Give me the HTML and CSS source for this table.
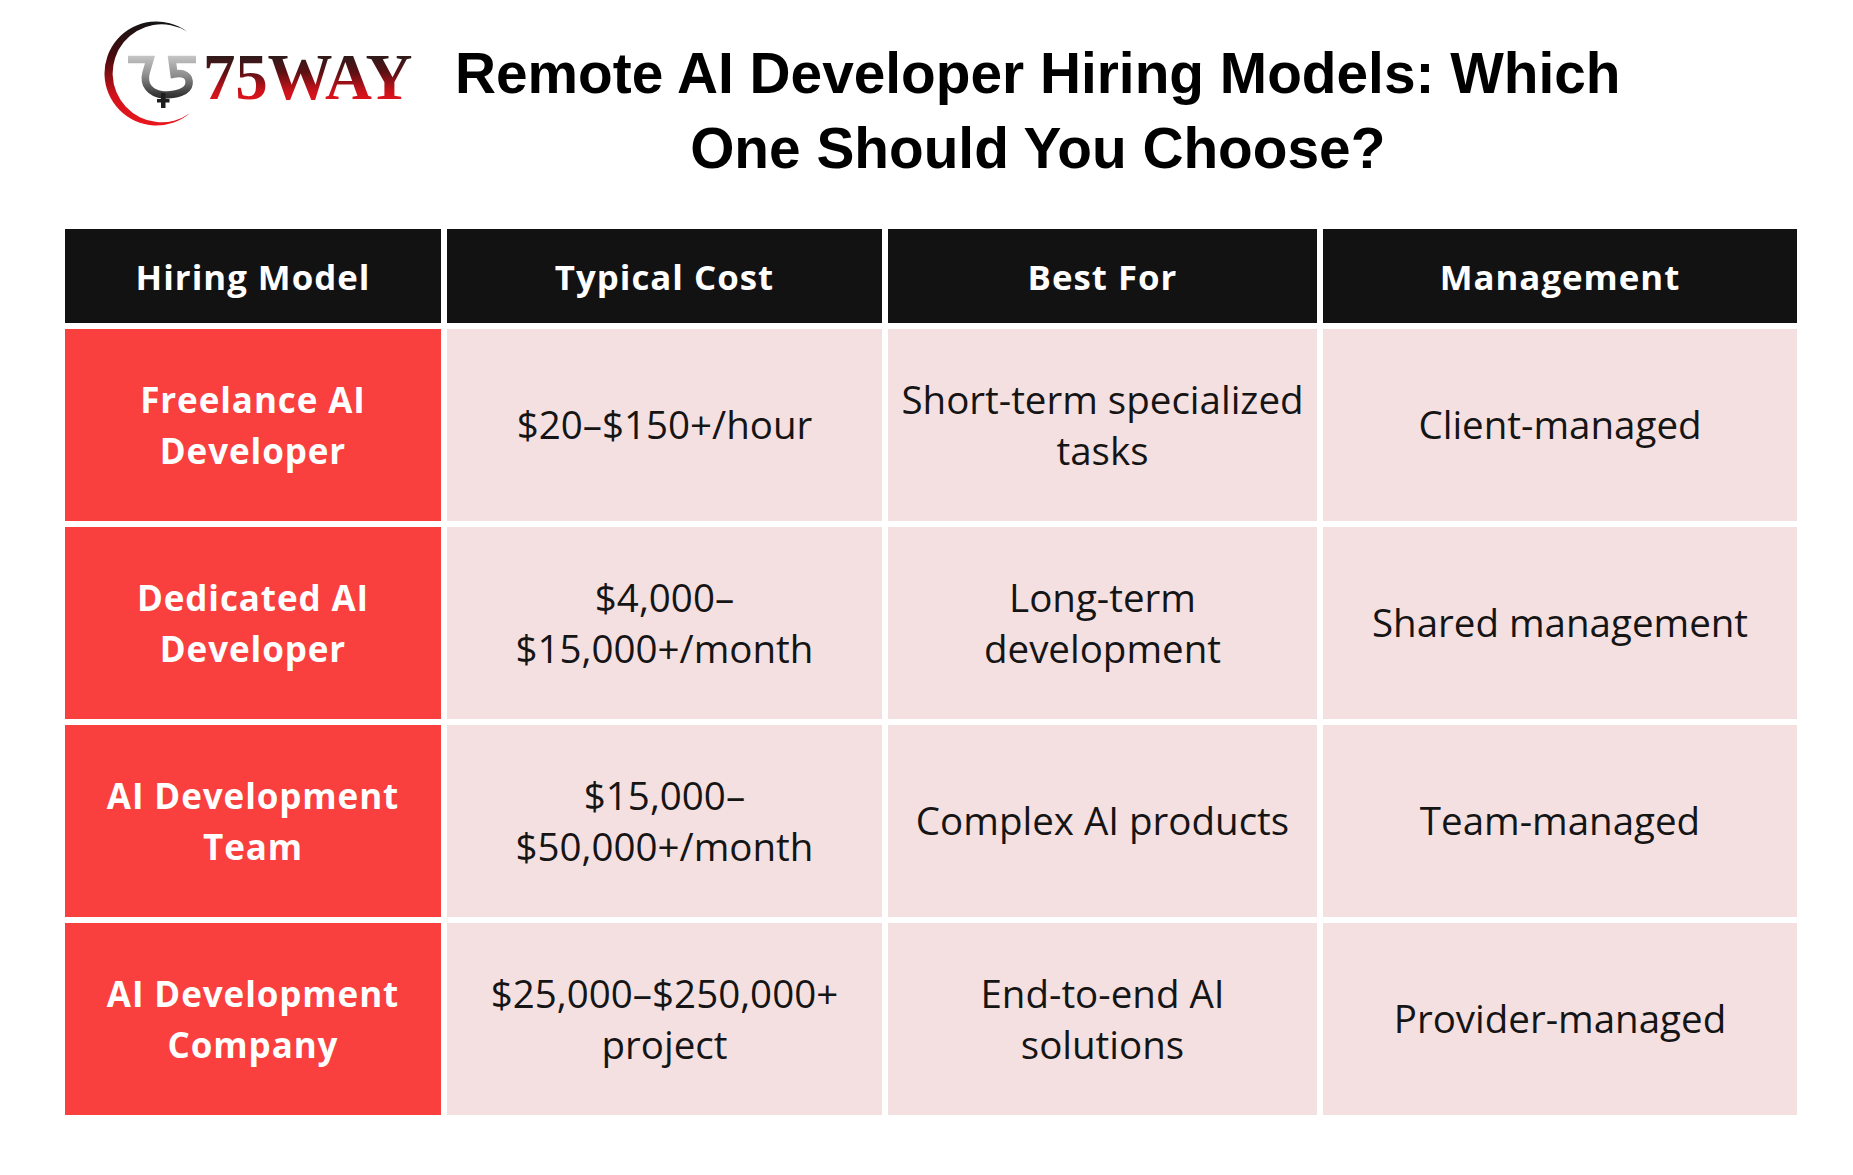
FILE: index.html
```html
<!DOCTYPE html>
<html lang="en">
<head>
<meta charset="utf-8">
<title>Remote AI Developer Hiring Models</title>
<link rel="stylesheet" href="styles.css">
</head>
<body>
<div class="page">
  <header class="top">
    <div class="logo">
      <svg class="mark" width="100" height="120" viewBox="0 0 100 120" aria-hidden="true">
        <defs>
          <linearGradient id="ring" x1="0" y1="0" x2="0" y2="1">
            <stop offset="0" stop-color="#141414"/>
            <stop offset="0.35" stop-color="#4a0b0e"/>
            <stop offset="0.7" stop-color="#d0121a"/>
            <stop offset="1" stop-color="#ea161e"/>
          </linearGradient>
          <linearGradient id="steel" gradientUnits="userSpaceOnUse" x1="0" y1="40" x2="0" y2="92">
            <stop offset="0" stop-color="#c8c8c8"/>
            <stop offset="0.4" stop-color="#8c8c8c"/>
            <stop offset="0.75" stop-color="#3a3a3a"/>
            <stop offset="1" stop-color="#151515"/>
          </linearGradient>
        </defs>
        <path fill="url(#ring)" d="M87.1 16.4 A52 52 0 1 0 89.9 98.3 A49 49 0 1 1 87.1 16.4 Z"/>
        <g fill="none" stroke="url(#steel)" stroke-width="7.5" stroke-linejoin="miter">
          <path d="M28 44.5 H50 L46 58 C43 70 50 78 63 80"/>
          <path d="M96 44.5 H72 L74 59 C84 57 90 61 89 69 C88 77 76 80 63 80"/>
        </g>
        <path fill="#1e1e1e" d="M61 78 H65.5 V93 H61 Z M57 84 H69.5 V87.5 H57 Z"/>
      </svg>
      <span class="brand">75WAY</span>
    </div>
    <h1 class="title">Remote AI Developer Hiring Models: Which<br>One Should You Choose?</h1>
  </header>

  <div class="table">
    <div class="th">Hiring Model</div>
    <div class="th">Typical Cost</div>
    <div class="th">Best For</div>
    <div class="th">Management</div>

    <div class="model">Freelance AI<br>Developer</div>
    <div class="td">$20–$150+/hour</div>
    <div class="td">Short-term specialized<br>tasks</div>
    <div class="td">Client-managed</div>

    <div class="model">Dedicated AI<br>Developer</div>
    <div class="td">$4,000–<br>$15,000+/month</div>
    <div class="td">Long-term<br>development</div>
    <div class="td">Shared management</div>

    <div class="model">AI Development<br>Team</div>
    <div class="td">$15,000–<br>$50,000+/month</div>
    <div class="td">Complex AI products</div>
    <div class="td">Team-managed</div>

    <div class="model">AI Development<br>Company</div>
    <div class="td">$25,000–$250,000+<br>project</div>
    <div class="td">End-to-end AI<br>solutions</div>
    <div class="td">Provider-managed</div>
  </div>
</div>
</body>
</html>
```

FILE: styles.css
```css
html, body {
  margin: 0;
  padding: 0;
  background: #ffffff;
}

.page {
  width: 1853px;
  height: 1175px;
  overflow: hidden;
  background: #ffffff;
}

.top {
  display: flex;
  align-items: flex-start;
  height: 229px;
  padding-left: 100px;
  box-sizing: border-box;
}

.logo {
  flex: 0 0 355px;
  display: flex;
  align-items: flex-start;
  margin-top: 15px;
}

.mark {
  display: block;
  flex: 0 0 auto;
}

.brand {
  margin-top: 30px;
  margin-left: 3px;
  font-family: "Liberation Serif", "DejaVu Serif", serif;
  font-weight: 700;
  font-size: 65px;
  line-height: 65px;
  letter-spacing: -0.3px;
  background: linear-gradient(180deg, #2b1b1b 15%, #5c1014 42%, #c8121a 70%, #e8151d 90%);
  -webkit-background-clip: text;
  background-clip: text;
  color: transparent;
}

.title {
  margin: 36px 0 0 0;
  font-family: "Liberation Sans", Arial, sans-serif;
  font-weight: 700;
  font-size: 56.8px;
  line-height: 75px;
  text-align: center;
  color: #000000;
  white-space: nowrap;
}

.table {
  margin-left: 65px;
  display: grid;
  grid-template-columns: 376px 435px 429px 474px;
  grid-template-rows: 94px repeat(4, 192.5px);
  column-gap: 6px;
  row-gap: 5.5px;
  width: 1732px;
}

.th, .td, .model {
  display: flex;
  align-items: center;
  justify-content: center;
  text-align: center;
  white-space: nowrap;
  font-family: "Open Sans", "Noto Sans", sans-serif;
}

.th {
  background: #121212;
  color: #ffffff;
  font-weight: 700;
  font-size: 34.8px;
  line-height: 51px;
  letter-spacing: 1px;
}

.model {
  background: #f9403f;
  color: #ffffff;
  font-weight: 700;
  font-size: 35px;
  line-height: 51px;
  letter-spacing: 0.9px;
}

.td {
  background: #f5e0e1;
  color: #151515;
  font-weight: 400;
  font-size: 38.5px;
  line-height: 51px;
}
```
